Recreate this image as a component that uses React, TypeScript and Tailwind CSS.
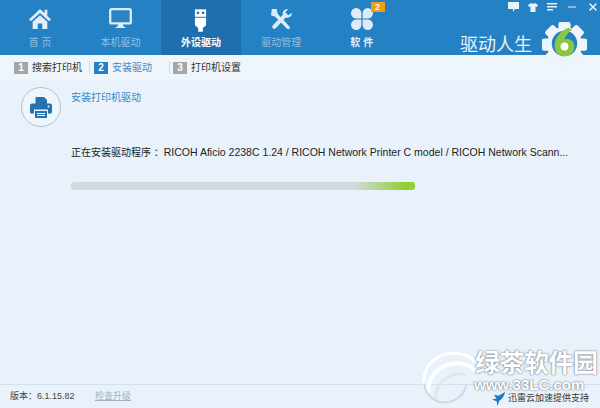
import { Minus, X } from 'lucide-react'
import type { ReactNode } from 'react'

const cjk = '[font-family:"Liberation_Sans","Noto_Sans_CJK_SC",sans-serif]'

function HomeIcon() {
  return (
    <svg width="24" height="22" viewBox="0 0 26 24" fill="#e3eef7">
      <path d="M13 1 L1 12.5 L3 14.5 L13 5.5 L23 14.5 L25 12.5 L21 8.6 L21 2 L18 2 L18 5.8 Z" />
      <path d="M5 15 L13 8 L21 15 L21 23 L15.5 23 L15.5 17 L10.5 17 L10.5 23 L5 23 Z" />
    </svg>
  )
}

function MonitorIcon() {
  return (
    <svg width="23" height="21" viewBox="0 0 24 22" fill="none">
      <rect x="1.2" y="1.2" width="21.6" height="15" rx="1.5" fill="#2a84c4" stroke="#dcebf5" strokeWidth="2.4" />
      <path d="M9.5 16 H14.5 L15 19 L18 21 H6 L9 19 Z" fill="#dcebf5" />
    </svg>
  )
}

function UsbIcon() {
  return (
    <svg width="13" height="25" viewBox="0 0 14 24" fill="#ffffff">
      <path d="M1 0 H13 V8 H1 Z" />
      <rect x="3" y="2.5" width="2.5" height="2.5" fill="#1f6fae" />
      <rect x="8.5" y="2.5" width="2.5" height="2.5" fill="#1f6fae" />
      <path d="M1 9 H13 V17 L9.5 20 V24 H4.5 V20 L1 17 Z" />
    </svg>
  )
}

function ToolsIcon() {
  return (
    <svg width="23" height="23" viewBox="0 0 24 24" fill="#dcebf5">
      <path d="M2 1 L7 1 L8 6 L20 19 C22 21 19.5 23.5 17.5 21.5 L5.5 9 L1 7.5 Z" />
      <path d="M23 5 C23 9 19 11 16.5 9.8 L6 21 C4 23 1 20.5 3 18 L13.5 7 C12.5 4 15 0.5 19 1 L16 4.5 L19 7.5 Z" />
    </svg>
  )
}

function CloverIcon() {
  return (
    <svg width="22" height="22" viewBox="0 0 22 22" fill="#dcebf5">
      <path d="M10.4 10.4 H5.2 A5.2 5.2 0 1 1 10.4 5.2 Z" />
      <path d="M11.6 10.4 V5.2 A5.2 5.2 0 1 1 16.8 10.4 Z" />
      <path d="M10.4 11.6 V16.8 A5.2 5.2 0 1 1 5.2 11.6 Z" />
      <path d="M11.6 11.6 H16.8 A5.2 5.2 0 1 1 11.6 16.8 Z" />
    </svg>
  )
}

function GearLogo() {
  const teeth = [0, 45, 90, 135, 180, 225, 270, 315]
  return (
    <svg width="47" height="47" viewBox="0 0 48 48">
      {teeth.map(a => (
        <rect key={a} x="18" y="1" width="12" height="46" rx="2" fill="#eef5fa" transform={`rotate(${a} 24 24)`} />
      ))}
      <circle cx="24" cy="24" r="18" fill="#eef5fa" />
      <circle cx="24" cy="23" r="13" fill="#2481c3" />
      <path d="M28 7 C20 10 14 17 14 25 C14 32 18 36 24 36 C30 36 34 32 34 26 C34 20 29 17 24 19 C25 15 28 11 32 9 Z" fill="#8cc63f" />
      <circle cx="24" cy="26" r="4" fill="#ffffff" />
    </svg>
  )
}

function PrinterIcon() {
  return (
    <svg width="22" height="21" viewBox="0 0 22 21" fill="#2273b0">
      <path d="M5.5 0 H14 L17 3 V7 H5.5 Z" />
      <path d="M2 6.5 H20 C21.2 6.5 22 7.4 22 8.5 V15 C22 16 21.2 16.5 20 16.5 H18 V12.5 H4 V16.5 H2 C0.8 16.5 0 16 0 15 V8.5 C0 7.4 0.8 6.5 2 6.5 Z" />
      <path d="M5 14 H17 V21 H5 Z" />
      <circle cx="18.5" cy="9.5" r="1" fill="#ffffff" />
      <rect x="7" y="16" width="8" height="1" fill="#ffffff" />
      <rect x="7" y="18" width="8" height="1" fill="#ffffff" />
    </svg>
  )
}

function BirdIcon() {
  return (
    <svg width="15" height="15" viewBox="0 0 16 16" fill="#1f78c0">
      <path d="M15 1 L8 5 L3 4 L6 8 L1 9 L6 11 L7 16 L9 10 C12 9 14 5 15 1 Z" />
    </svg>
  )
}

function WatermarkSwirl() {
  return (
    <svg width="58" height="56" viewBox="0 0 58 56" fill="none" stroke="#ffffff" strokeLinecap="round">
      <path d="M4 36 C2 16 20 2 40 6 C46 7 52 10 56 14" strokeWidth="3" />
      <path d="M8 44 C8 26 24 12 44 16 C48 17 52 19 54 22" strokeWidth="4" />
      <path d="M16 52 C14 38 26 24 44 26" strokeWidth="3" stroke="#dfe7ec" />
      <path d="M4 36 C6 46 12 52 20 54 C34 56 44 48 46 38" strokeWidth="2" stroke="#cfd9df" />
    </svg>
  )
}

function NavTab({ icon, label, active, dim }: { icon: ReactNode; label: string; active?: boolean; dim?: boolean }) {
  return (
    <div className={`w-[80.4px] h-full flex flex-col items-center shrink-0 ${active ? 'bg-[#1f6fae]' : ''}`}>
      <div className="h-[35px] pt-[8px] flex items-start justify-center">{icon}</div>
      <div
        className={`text-[10px] leading-[14px] mt-[1px] ${active ? 'text-white font-bold' : dim ? 'text-[#8fc0e2]' : 'text-[#e8f2f9] font-bold'}`}
      >
        {label}
      </div>
    </div>
  )
}

function Step({ n, label, active }: { n: number; label: string; active?: boolean }) {
  return (
    <div className="flex items-center gap-[4px]">
      <span
        className={`w-[14px] h-[12px] flex items-center justify-center text-[10px] font-bold text-white ${active ? 'bg-[#2481c3]' : 'bg-[#a6a6a6]'}`}
      >
        {n}
      </span>
      <span className={`text-[10px] ${active ? 'text-[#3b8ac8]' : 'text-[#333333]'}`}>{label}</span>
    </div>
  )
}

export default function App() {
  return (
    <div className={`w-[600px] h-[408px] relative overflow-hidden flex flex-col bg-[#e9f2fa] ${cjk}`}>
      <header className="h-[55px] bg-[#2481c3] flex shrink-0 relative">
        <NavTab icon={<HomeIcon />} label="首 页" dim />
        <NavTab icon={<MonitorIcon />} label="本机驱动" dim />
        <NavTab icon={<UsbIcon />} label="外设驱动" active />
        <NavTab icon={<ToolsIcon />} label="驱动管理" dim />
        <div className="relative">
          <NavTab icon={<CloverIcon />} label="软 件" />
          <span className="absolute left-[49px] top-[2px] w-[14px] h-[10px] bg-[#f39c12] text-white text-[9px] leading-[10px] text-center font-bold">
            2
          </span>
        </div>
        <div className="absolute right-[1px] top-[1px] flex items-center gap-[9px] text-[#e8f2f9]">
          <svg width="11" height="10" viewBox="0 0 11 10" fill="currentColor">
            <path d="M0 0 H11 V7 H7 L5 10 V7 H0 Z" />
          </svg>
          <svg width="10" height="9" viewBox="0 0 10 9" fill="currentColor">
            <path d="M3 0 L5 1 L7 0 L10 2 L9 4 L7.5 3.5 V9 H2.5 V3.5 L1 4 L0 2 Z" />
          </svg>
          <svg width="10" height="9" viewBox="0 0 10 9" fill="currentColor">
            <path d="M0 0 H10 V1.5 H0 Z M0 3 H10 V4.5 H0 Z M0 6 H6 V7.5 H0 Z" />
          </svg>
          <Minus size={12} strokeWidth={2} />
          <X size={12} strokeWidth={3} />
        </div>
        <div className="absolute right-[12px] top-[21px] flex items-center gap-[9px]">
          <span className="text-[18px] leading-[20px] text-[#e8f2f9] mt-[1px]">驱动人生</span>
          <GearLogo />
        </div>
      </header>

      <nav className="h-[25px] bg-[#eef5fb] flex items-center pl-[14px] shrink-0">
        <Step n={1} label="搜索打印机" />
        <div className="w-px h-[13px] bg-[#d5dde3] ml-[7px] mr-[4px]" />
        <Step n={2} label="安装驱动" active />
        <div className="w-px h-[13px] bg-[#d5dde3] ml-[17px] mr-[3px]" />
        <Step n={3} label="打印机设置" />
      </nav>

      <main className="flex-1 pl-[21px] pt-[7px] flex gap-[10px]">
        <div className="w-[40px] h-[40px] rounded-full border border-[#a9c5d8] bg-[#eef5fb] flex items-center justify-center shrink-0">
          <PrinterIcon />
        </div>
        <div className="flex flex-col">
          <div className="text-[10px] leading-[14px] text-[#3a86c4] mt-[4px]">安装打印机驱动</div>
          <div className="text-[10px] leading-[14px] text-[#222222] mt-[40px] whitespace-nowrap">
            正在安装驱动程序 ：<span className="text-[10.5px]">RICOH Aficio 2238C 1.24 / RICOH Network Printer C model / RICOH Network Scann...</span>
          </div>
          <div className="w-[344px] h-[8px] rounded-[3px] mt-[22px] bg-[linear-gradient(to_right,#d3dbe2_0%,#d3dbe2_82%,#8fd032_97%,#8fd032_100%)]" />
        </div>
      </main>

      <footer className="h-[24px] border-t border-[#d3e0ea] flex items-center pl-[10px] shrink-0 relative">
        <span className="text-[9px] text-[#444444] w-[85px]">版本：6.1.15.82</span>
        <span className="text-[9px] text-[#9db3c4] underline">检查升级</span>
        <div className="absolute right-[11px] top-[6px] flex items-center gap-[2px]">
          <BirdIcon />
          <span className="text-[9px] leading-[13px] text-[#333333]">迅雷云加速提供支持</span>
        </div>
      </footer>

      <div className="absolute left-[420px] top-[348px]">
        <WatermarkSwirl />
      </div>
      <div className="absolute left-[475px] top-[350px] text-[25px] leading-[27px] font-bold text-white tracking-[-0.5px] [text-shadow:0_0_1px_#6f7a82,0_0_2px_#6f7a82] whitespace-nowrap">
        绿茶软件园
      </div>
      <div className="absolute left-[474px] top-[378px] text-[15px] leading-[13px] font-bold text-white [text-shadow:0_0_1px_#6f7a82,0_0_2px_#6f7a82] whitespace-nowrap">
        www.33LC.com
      </div>
    </div>
  )
}
